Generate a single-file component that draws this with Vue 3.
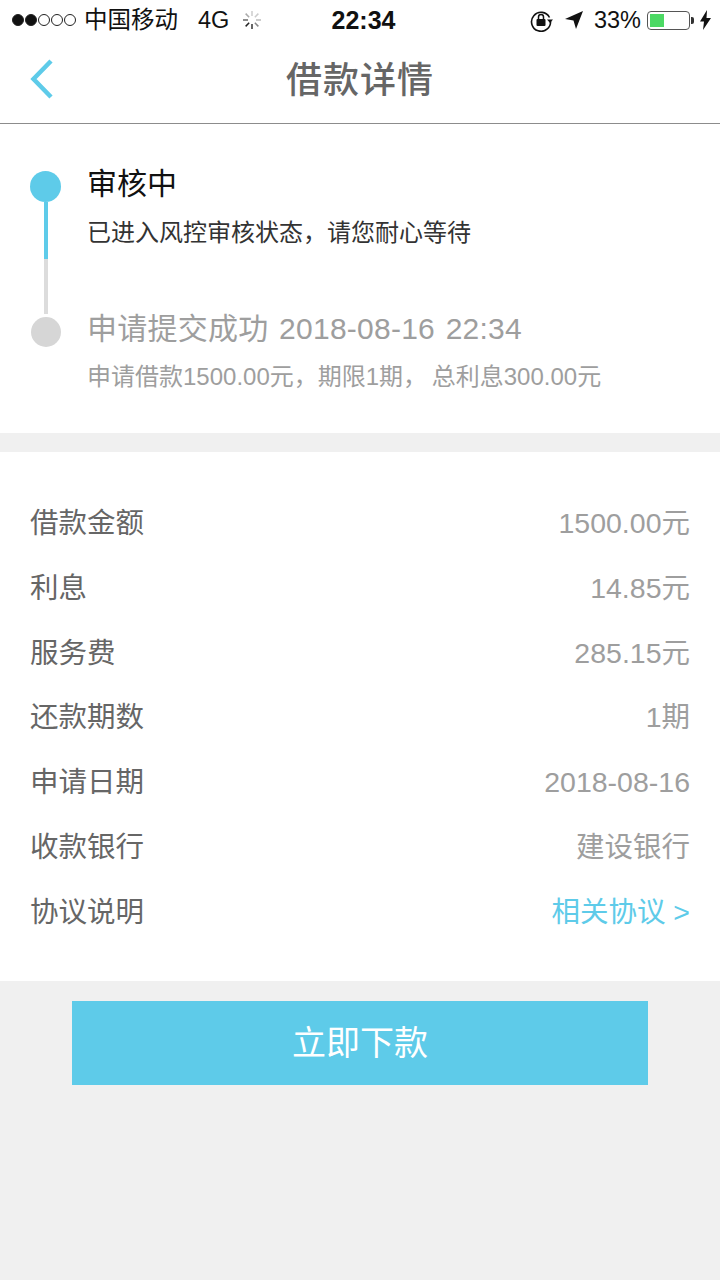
<template>
  <div class="page">
    <div class="status">
      <div class="status__left">
        <span class="signal">
          <i v-for="n in 5" :key="n" :class="{ on: n <= 2 }"></i>
        </span>
        <span class="carrier">中国移动</span>
        <span class="net">4G</span>
        <svg class="spinner" width="20" height="20" viewBox="0 0 20 20">
          <line
            v-for="(s, i) in spokes" :key="i"
            x1="10" y1="1" x2="10" y2="6"
            :stroke="s" stroke-width="1.5"
            :transform="`rotate(${i * 45} 10 10)`"
          />
        </svg>
      </div>
      <div class="status__time">22:34</div>
      <div class="status__right">
        <svg width="24" height="24" viewBox="0 0 24 24" fill="none">
          <path d="M20.500 9.500A9.500 9.500 0 1 0 21.500 13" stroke="#111" stroke-width="1.6" />
          <path d="M18 11.500h6l-3 3.500z" fill="#111" />
          <rect x="7.500" y="11" width="9" height="7" rx="1" fill="#111" />
          <path d="M9.500 11V9a2.500 2.500 0 0 1 5 0v2" stroke="#111" stroke-width="1.500" />
        </svg>
        <svg class="arrow" width="20" height="20" viewBox="0 0 20 20">
          <path d="M19 1 1 9l8.500 1.500L12 19z" fill="#111" />
        </svg>
        <span class="pct">33%</span>
        <span class="battery"><i></i></span>
        <span class="battery__tip"></span>
        <svg width="11" height="20" viewBox="0 0 11 20">
          <path d="M7 0 0 11.500h4L3 20l8-12H6.500z" fill="#111" />
        </svg>
      </div>
    </div>

    <div class="nav">
      <svg class="nav__back" width="28" height="42" viewBox="0 0 28 42" fill="none">
        <path d="M24 3 6.500 21 24 39" stroke="#5ecbe9" stroke-width="4.500" />
      </svg>
      <h1>借款详情</h1>
    </div>

    <section class="steps">
      <div class="step step--active">
        <div class="step__rail">
          <span class="dot dot--on"></span>
          <span class="bar bar--on"></span>
          <span class="bar bar--off"></span>
        </div>
        <div class="step__body">
          <div class="step__title">审核中</div>
          <div class="step__desc">已进入风控审核状态，请您耐心等待</div>
        </div>
      </div>
      <div class="step step--done">
        <div class="step__rail">
          <span class="dot dot--off"></span>
        </div>
        <div class="step__body">
          <div class="step__title">申请提交成功 2018-08-16 22:34</div>
          <div class="step__desc">申请借款1500.00元，期限1期， 总利息300.00元</div>
        </div>
      </div>
    </section>

    <section class="detail">
      <div v-for="row in rows" :key="row.label" class="row">
        <span class="row__label">{{ row.label }}</span>
        <span class="row__value" :class="{ 'row__value--link': row.link }">{{ row.value }}</span>
      </div>
    </section>

    <div class="action">
      <button class="submit">立即下款</button>
    </div>
  </div>
</template>

<script setup>
const spokes = ['#ccc', '#ccc', '#bbb', '#888', '#333', '#222', '#666', '#aaa']

const rows = [
  { label: '借款金额', value: '1500.00元' },
  { label: '利息', value: '14.85元' },
  { label: '服务费', value: '285.15元' },
  { label: '还款期数', value: '1期' },
  { label: '申请日期', value: '2018-08-16' },
  { label: '收款银行', value: '建设银行' },
  { label: '协议说明', value: '相关协议 >', link: true },
]
</script>

<style>
html, body {
  margin: 0;
  background: #f0f0f0;
}
</style>

<style scoped>
.page {
  width: 720px;
  height: 1280px;
  overflow: hidden;
  background: #f0f0f0;
  font-family: "Liberation Sans", "Noto Sans CJK SC", sans-serif;
}
.status {
  height: 40px;
  background: #fff;
  position: relative;
  display: flex;
  align-items: center;
  justify-content: space-between;
  color: #111;
  font-size: 23.5px;
}
.status__left {
  display: flex;
  align-items: center;
  padding-left: 12px;
}
.signal {
  display: flex;
  gap: 1px;
  margin-right: 8px;
}
.signal i {
  width: 12px;
  height: 12px;
  box-sizing: border-box;
  border: 1px solid #222;
  border-radius: 50%;
}
.signal i.on {
  background: #111;
}
.carrier {
  position: relative;
  top: -2px;
}
.net {
  margin-left: 20px;
}
.spinner {
  margin-left: 13px;
}
.status__time {
  position: absolute;
  left: 7px;
  right: 0;
  text-align: center;
  font-weight: 700;
  font-size: 25px;
  pointer-events: none;
}
.status__right {
  display: flex;
  align-items: center;
  padding-right: 9px;
}
.arrow {
  margin-left: 11px;
}
.pct {
  margin-left: 10px;
}
.battery {
  margin-left: 6px;
  width: 43px;
  height: 19px;
  box-sizing: border-box;
  border: 1px solid #555;
  border-radius: 4px;
  padding: 2px;
  display: block;
}
.battery i {
  display: block;
  width: 14px;
  height: 13px;
  background: #4cd964;
}
.battery__tip {
  width: 3px;
  height: 7px;
  margin: 0 6px 0 1px;
  background: #333;
  border-radius: 0 2px 2px 0;
}
.nav {
  height: 84px;
  box-sizing: border-box;
  padding-bottom: 9px;
  background: #fff;
  border-bottom: 1px solid #8c8c8c;
  position: relative;
  display: flex;
  align-items: center;
  justify-content: center;
}
.nav h1 {
  margin: 0;
  font-size: 36px;
  font-weight: 500;
  color: #666;
  letter-spacing: 1px;
}
.nav__back {
  position: absolute;
  left: 27px;
  top: 18px;
}
.steps {
  height: 309px;
  box-sizing: border-box;
  padding-top: 47px;
  background: #fff;
}
.step {
  display: flex;
}
.step--active {
  height: 146px;
}
.step__rail {
  width: 87px;
  flex: none;
  display: flex;
  flex-direction: column;
  align-items: center;
  padding: 0 26px 0 30px;
  box-sizing: border-box;
}
.dot {
  border-radius: 50%;
  flex: none;
}
.dot--on {
  width: 31px;
  height: 31px;
  background: #5ecbe9;
}
.dot--off {
  width: 30px;
  height: 30px;
  background: #d6d6d6;
}
.bar {
  width: 4px;
  flex: none;
}
.bar--on {
  height: 57px;
  background: #5ecbe9;
}
.bar--off {
  height: 55px;
  background: #dcdcdc;
}
.step__body {
  margin-top: -5px;
}
.step__title {
  font-size: 30px;
  line-height: 36px;
  color: #111;
}
.step__desc {
  margin-top: 13px;
  font-size: 24px;
  line-height: 36px;
  color: #333;
}
.step--done .step__body {
  margin-top: -6px;
}
.step--done .step__title {
  color: #9e9e9e;
  letter-spacing: 0.25px;
  word-spacing: 2px;
}
.step--done .step__desc {
  margin-top: 12px;
  color: #9e9e9e;
  word-spacing: -2px;
}
.detail {
  margin-top: 19px;
  height: 529px;
  box-sizing: border-box;
  padding: 39px 30px 0;
  background: #fff;
}
.row {
  height: 64.8px;
  line-height: 64.8px;
  display: flex;
  align-items: baseline;
  justify-content: space-between;
  font-size: 28.5px;
}
.row__label {
  color: #666;
}
.row__value {
  color: #9e9e9e;
}
.row__value--link {
  color: #5ecbe9;
}
.action {
  padding-top: 20px;
  display: flex;
  justify-content: center;
}
.submit {
  width: 576px;
  height: 84px;
  border: 0;
  padding: 0 0 5px;
  background: #5ecbe9;
  color: #fff;
  font-family: inherit;
  font-size: 34px;
}
</style>
